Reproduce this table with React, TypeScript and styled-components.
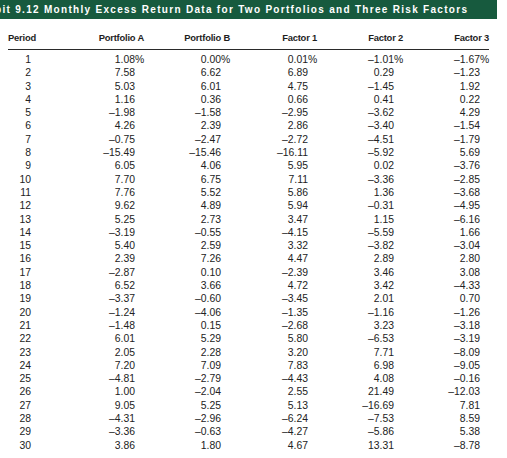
import React from 'react';
import styled, { createGlobalStyle } from 'styled-components';

const GlobalStyle = createGlobalStyle`
  html, body {
    margin: 0;
    padding: 0;
    background: #ffffff;
  }
  body {
    font-family: 'Liberation Sans', Arial, sans-serif;
    color: #1e1e1e;
  }
`;

type Row = [number, string, string, string, string, string];

const rows: Row[] = [
  [1, '1.08', '0.00', '0.01', '–1.01', '–1.67'],
  [2, '7.58', '6.62', '6.89', '0.29', '–1.23'],
  [3, '5.03', '6.01', '4.75', '–1.45', '1.92'],
  [4, '1.16', '0.36', '0.66', '0.41', '0.22'],
  [5, '–1.98', '–1.58', '–2.95', '–3.62', '4.29'],
  [6, '4.26', '2.39', '2.86', '–3.40', '–1.54'],
  [7, '–0.75', '–2.47', '–2.72', '–4.51', '–1.79'],
  [8, '–15.49', '–15.46', '–16.11', '–5.92', '5.69'],
  [9, '6.05', '4.06', '5.95', '0.02', '–3.76'],
  [10, '7.70', '6.75', '7.11', '–3.36', '–2.85'],
  [11, '7.76', '5.52', '5.86', '1.36', '–3.68'],
  [12, '9.62', '4.89', '5.94', '–0.31', '–4.95'],
  [13, '5.25', '2.73', '3.47', '1.15', '–6.16'],
  [14, '–3.19', '–0.55', '–4.15', '–5.59', '1.66'],
  [15, '5.40', '2.59', '3.32', '–3.82', '–3.04'],
  [16, '2.39', '7.26', '4.47', '2.89', '2.80'],
  [17, '–2.87', '0.10', '–2.39', '3.46', '3.08'],
  [18, '6.52', '3.66', '4.72', '3.42', '–4.33'],
  [19, '–3.37', '–0.60', '–3.45', '2.01', '0.70'],
  [20, '–1.24', '–4.06', '–1.35', '–1.16', '–1.26'],
  [21, '–1.48', '0.15', '–2.68', '3.23', '–3.18'],
  [22, '6.01', '5.29', '5.80', '–6.53', '–3.19'],
  [23, '2.05', '2.28', '3.20', '7.71', '–8.09'],
  [24, '7.20', '7.09', '7.83', '6.98', '–9.05'],
  [25, '–4.81', '–2.79', '–4.43', '4.08', '–0.16'],
  [26, '1.00', '–2.04', '2.55', '21.49', '–12.03'],
  [27, '9.05', '5.25', '5.13', '–16.69', '7.81'],
  [28, '–4.31', '–2.96', '–6.24', '–7.53', '8.59'],
  [29, '–3.36', '–0.63', '–4.27', '–5.86', '5.38'],
  [30, '3.86', '1.80', '4.67', '13.31', '–8.78'],
];

const headers = ['Portfolio A', 'Portfolio B', 'Factor 1', 'Factor 2', 'Factor 3'];

const Page = styled.div`
  width: 507px;
  height: 458px;
  overflow: hidden;
`;

const TitleBar = styled.div`
  width: 497px;
  height: 19px;
  background: #175a3e;
  color: #ffffff;
  display: flex;
  align-items: center;
  overflow: hidden;
  white-space: nowrap;
`;

const TitleText = styled.span`
  margin-left: -5px;
  font-family: 'Liberation Sans', Arial, sans-serif;
  font-weight: 700;
  font-size: 10px;
  letter-spacing: 1.3px;
`;

const Table = styled.div`
  display: grid;
  grid-template-columns: 32px 104px 86px 87px 86px 86px;
  width: 481px;
  margin-left: 8px;
`;

const HeadCell = styled.div<{ $left?: boolean }>`
  height: 31px;
  padding-top: 7px;
  box-sizing: border-box;
  display: flex;
  align-items: center;
  justify-content: ${(p) => (p.$left ? 'flex-start' : 'flex-end')};
  font-weight: 700;
  font-size: 9.4px;
  letter-spacing: -0.2px;
  color: #1e1e1e;
  border-bottom: 1.5px solid #2a2a2a;
  margin-bottom: 3px;
  white-space: nowrap;
`;

const Cell = styled.div<{ $period?: boolean }>`
  height: 13.3px;
  display: flex;
  align-items: center;
  justify-content: flex-end;
  padding-right: ${(p) => (p.$period ? '9px' : '0')};
  font-size: 10.4px;
  line-height: 13.3px;
  color: #222222;
  white-space: nowrap;
`;

const Suffix = styled.span`
  display: inline-block;
  width: 9px;
  text-align: left;
`;

const App: React.FC = () => {
  return (
    <Page>
      <GlobalStyle />
      <TitleBar>
        <TitleText>bit 9.12 Monthly Excess Return Data for Two Portfolios and Three Risk Factors</TitleText>
      </TitleBar>
      <Table>
        <HeadCell $left>Period</HeadCell>
        {headers.map((h) => (
          <HeadCell key={h}>{h}</HeadCell>
        ))}
        {rows.map((r) => (
          <React.Fragment key={r[0]}>
            <Cell $period>{r[0]}</Cell>
            {r.slice(1).map((v, i) => (
              <Cell key={i}>
                {v}
                <Suffix>{r[0] === 1 ? '%' : ''}</Suffix>
              </Cell>
            ))}
          </React.Fragment>
        ))}
      </Table>
    </Page>
  );
};

export default App;
